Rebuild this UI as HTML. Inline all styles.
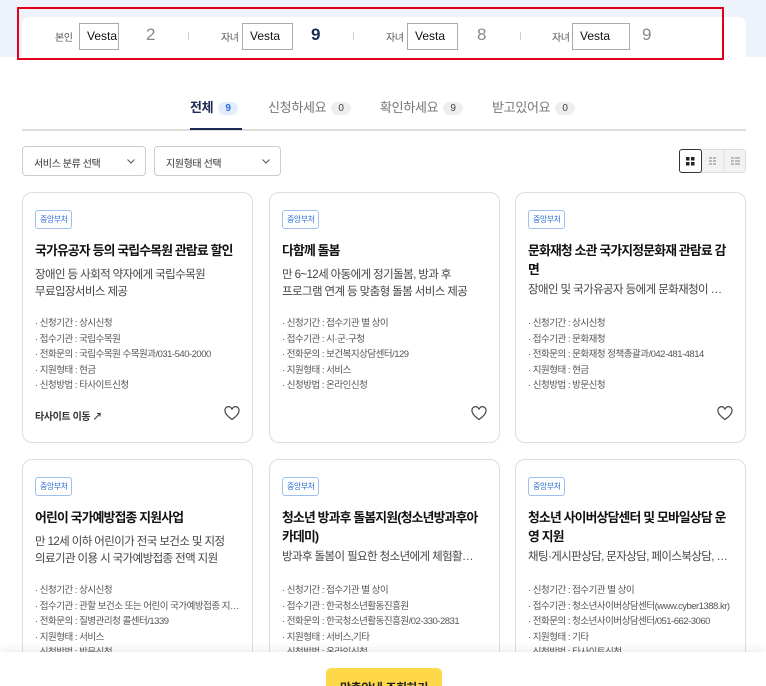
<!DOCTYPE html>
<html><head><meta charset="utf-8"><style>
*{margin:0;padding:0;box-sizing:border-box}
html,body{width:766px;height:686px;overflow:hidden}
body{background:#fff;font-family:"Liberation Sans","Noto Sans CJK KR",sans-serif;color:#222;position:relative}
.abs{position:absolute}
.topbg{left:0;top:0;width:766px;height:57px;background:#eef3fb}
.panel{left:22px;top:17px;width:724px;height:42px;background:#fff;border-radius:8px 8px 0 0}
.red{left:17px;top:7px;width:707px;height:53px;border:2px solid #e3001b}
.lab{font-size:10px;color:#555;top:29px;letter-spacing:-0.5px}
.inp{top:23px;height:27px;border:1px solid #aaa;background:#fff;font-size:12px;padding:5px 0 0 7px;color:#111}
.num{font-size:17px;top:25px;color:#888}
.sep{top:32px;width:1px;height:8px;background:#ccc}
.tab{top:97px;font-size:13px;color:#777;letter-spacing:-0.3px}
.cnt{display:inline-block;background:#eee;border-radius:8px;font-size:10px;padding:1px 7px;margin-left:5px;color:#444;vertical-align:1px}
.sel{top:146px;height:30px;border:1px solid #ccc;border-radius:4px;font-size:10px;padding:8px 0 0 11px;color:#333;letter-spacing:-0.4px}
.sel svg{position:absolute;right:10px;top:12px}
.card{border:1px solid #ddd;border-radius:10px;width:231px;height:251px;background:#fff}
.badge{position:absolute;left:12px;top:17px;border:1px solid #9cc0ef;border-radius:3px;font-size:8px;color:#2f6fd6;padding:3px 4px;letter-spacing:-0.5px}
.tt{position:absolute;left:12px;top:48px;width:212px;font-size:12.8px;font-weight:bold;line-height:19px;color:#111;letter-spacing:-0.8px}
.ds{font-size:11.5px;color:#444;line-height:16.5px;font-weight:normal;margin-top:7px;letter-spacing:-0.6px;width:200px}
.ds.one{white-space:nowrap;overflow:hidden;text-overflow:ellipsis;margin-top:3px;width:200px}
.ls{position:absolute;left:12px;top:123px;font-size:9.5px;color:#555;line-height:15.5px;width:212px;letter-spacing:-0.5px}
.ls div{white-space:nowrap;overflow:hidden;text-overflow:ellipsis}
.link{position:absolute;left:12px;top:215px;font-size:10px;font-weight:bold;color:#333;letter-spacing:-0.4px}
.heart{position:absolute;right:12px;top:213px}
.bot{left:0;top:652px;width:766px;height:60px;background:#fff;box-shadow:0 -4px 8px rgba(0,0,0,.06)}
.btn{left:326px;top:668px;width:116px;height:30px;background:#ffd84a;border-radius:5px;font-size:12px;font-weight:bold;text-align:center;padding-top:11px;color:#222;letter-spacing:-0.4px}
</style></head><body>
<div class="abs topbg"></div>
<div class="abs panel"></div>
<div class="abs lab" style="left:55px">본인</div>
<div class="abs inp" style="left:79px;width:40px">Vesta</div>
<div class="abs num" style="left:146px">2</div>
<div class="abs sep" style="left:188px"></div>
<div class="abs lab" style="left:221px">자녀</div>
<div class="abs inp" style="left:242px;width:51px">Vesta</div>
<div class="abs num" style="left:311px;color:#1a2a55;font-weight:bold">9</div>
<div class="abs sep" style="left:353px"></div>
<div class="abs lab" style="left:386px">자녀</div>
<div class="abs inp" style="left:407px;width:51px">Vesta</div>
<div class="abs num" style="left:477px">8</div>
<div class="abs sep" style="left:520px"></div>
<div class="abs lab" style="left:552px">자녀</div>
<div class="abs inp" style="left:572px;width:58px">Vesta</div>
<div class="abs num" style="left:642px">9</div>
<div class="abs red"></div>

<div class="abs tab" style="left:190px;color:#1a2a55;font-weight:bold">전체<span class="cnt" style="background:#e2edfc;color:#2f6fd6">9</span></div>
<div class="abs tab" style="left:268px">신청하세요<span class="cnt">0</span></div>
<div class="abs tab" style="left:380px">확인하세요<span class="cnt">9</span></div>
<div class="abs tab" style="left:492px">받고있어요<span class="cnt">0</span></div>
<div class="abs" style="left:22px;top:129px;width:724px;height:2px;background:#ddd"></div>
<div class="abs" style="left:190px;top:128px;width:52px;height:2px;background:#1a2a55"></div>

<div class="abs sel" style="left:22px;width:124px">서비스 분류 선택<svg width="8" height="5"><path d="M.5.5L4 4 7.5.5" fill="none" stroke="#555"/></svg></div>
<div class="abs sel" style="left:154px;width:127px">지원형태 선택<svg width="8" height="5"><path d="M.5.5L4 4 7.5.5" fill="none" stroke="#555"/></svg></div>
<div class="abs" style="left:679px;top:149px;width:67px;height:24px;border:1px solid #ddd;border-radius:3px;background:#f2f2f2"></div>
<div class="abs" style="left:679px;top:149px;width:23px;height:24px;border:1px solid #333;border-radius:3px;background:#fff">
<svg width="21" height="22"><g fill="#222"><rect x="6" y="7" width="3.5" height="3.5"/><rect x="11" y="7" width="3.5" height="3.5"/><rect x="6" y="12" width="3.5" height="3.5"/><rect x="11" y="12" width="3.5" height="3.5"/></g></svg></div>
<svg class="abs" style="left:702px;top:149px" width="44" height="24"><g fill="#bbb"><rect x="7" y="8" width="3" height="2"/><rect x="11" y="8" width="3" height="2"/><rect x="7" y="11" width="3" height="2"/><rect x="11" y="11" width="3" height="2"/><rect x="7" y="14" width="3" height="2"/><rect x="11" y="14" width="3" height="2"/><rect x="29" y="8" width="3" height="2"/><rect x="33" y="8" width="5" height="2"/><rect x="29" y="11" width="3" height="2"/><rect x="33" y="11" width="5" height="2"/><rect x="29" y="14" width="3" height="2"/><rect x="33" y="14" width="5" height="2"/></g><line x1="22" y1="1" x2="22" y2="23" stroke="#ddd"/></svg>

<div class="abs card" style="left:22px;top:192px">
<div class="badge">중앙부처</div>
<div class="tt" style="white-space:nowrap">국가유공자 등의 국립수목원 관람료 할인<div class="ds">장애인 등 사회적 약자에게 국립수목원<br>무료입장서비스 제공</div></div>
<div class="ls"><div>· 신청기간 : 상시신청</div><div>· 접수기관 : 국립수목원</div><div>· 전화문의 : 국립수목원 수목원과/031-540-2000</div><div>· 지원형태 : 현금</div><div>· 신청방법 : 타사이트신청</div></div>
<div class="link">타사이트 이동 ↗</div>
<svg class="heart" width="16" height="15" viewBox="0 0 16 15"><path d="M8 13.5C3 10 1 7.5 1 5a3.3 3.3 0 0 1 7-1.5A3.3 3.3 0 0 1 15 5c0 2.5-2 5-7 8.5z" fill="none" stroke="#444" stroke-width="1.2"/></svg>
</div>
<div class="abs card" style="left:269px;top:192px">
<div class="badge">중앙부처</div>
<div class="tt">다함께 돌봄<div class="ds">만 6~12세 아동에게 정기돌봄, 방과 후<br>프로그램 연계 등 맞춤형 돌봄 서비스 제공</div></div>
<div class="ls"><div>· 신청기간 : 접수기관 별 상이</div><div>· 접수기관 : 시·군·구청</div><div>· 전화문의 : 보건복지상담센터/129</div><div>· 지원형태 : 서비스</div><div>· 신청방법 : 온라인신청</div></div>
<svg class="heart" width="16" height="15" viewBox="0 0 16 15"><path d="M8 13.5C3 10 1 7.5 1 5a3.3 3.3 0 0 1 7-1.5A3.3 3.3 0 0 1 15 5c0 2.5-2 5-7 8.5z" fill="none" stroke="#444" stroke-width="1.2"/></svg>
</div>
<div class="abs card" style="left:515px;top:192px">
<div class="badge">중앙부처</div>
<div class="tt">문화재청 소관 국가지정문화재 관람료 감<br>면<div class="ds one">장애인 및 국가유공자 등에게 문화재청이 국가지정문화재</div></div>
<div class="ls"><div>· 신청기간 : 상시신청</div><div>· 접수기관 : 문화재청</div><div>· 전화문의 : 문화재청 정책총괄과/042-481-4814</div><div>· 지원형태 : 현금</div><div>· 신청방법 : 방문신청</div></div>
<svg class="heart" width="16" height="15" viewBox="0 0 16 15"><path d="M8 13.5C3 10 1 7.5 1 5a3.3 3.3 0 0 1 7-1.5A3.3 3.3 0 0 1 15 5c0 2.5-2 5-7 8.5z" fill="none" stroke="#444" stroke-width="1.2"/></svg>
</div>

<div class="abs card" style="left:22px;top:459px">
<div class="badge">중앙부처</div>
<div class="tt">어린이 국가예방접종 지원사업<div class="ds">만 12세 이하 어린이가 전국 보건소 및 지정<br>의료기관 이용 시 국가예방접종 전액 지원</div></div>
<div class="ls"><div>· 신청기간 : 상시신청</div><div>· 접수기관 : 관할 보건소 또는 어린이 국가예방접종 지정의료기관</div><div>· 전화문의 : 질병관리청 콜센터/1339</div><div>· 지원형태 : 서비스</div><div>· 신청방법 : 방문신청</div></div>
</div>
<div class="abs card" style="left:269px;top:459px">
<div class="badge">중앙부처</div>
<div class="tt">청소년 방과후 돌봄지원(청소년방과후아<br>카데미)<div class="ds one">방과후 돌봄이 필요한 청소년에게 체험활동 지원</div></div>
<div class="ls"><div>· 신청기간 : 접수기관 별 상이</div><div>· 접수기관 : 한국청소년활동진흥원</div><div>· 전화문의 : 한국청소년활동진흥원/02-330-2831</div><div>· 지원형태 : 서비스,기타</div><div>· 신청방법 : 온라인신청</div></div>
</div>
<div class="abs card" style="left:515px;top:459px">
<div class="badge">중앙부처</div>
<div class="tt">청소년 사이버상담센터 및 모바일상담 운<br>영 지원<div class="ds one">채팅·게시판상담, 문자상담, 페이스북상담, 카카오톡</div></div>
<div class="ls"><div>· 신청기간 : 접수기관 별 상이</div><div>· 접수기관 : 청소년사이버상담센터(www.cyber1388.kr)</div><div>· 전화문의 : 청소년사이버상담센터/051-662-3060</div><div>· 지원형태 : 기타</div><div>· 신청방법 : 타사이트신청</div></div>
</div>

<div class="abs bot"></div>
<div class="abs btn">맞춤안내 조회하기</div>
</body></html>
